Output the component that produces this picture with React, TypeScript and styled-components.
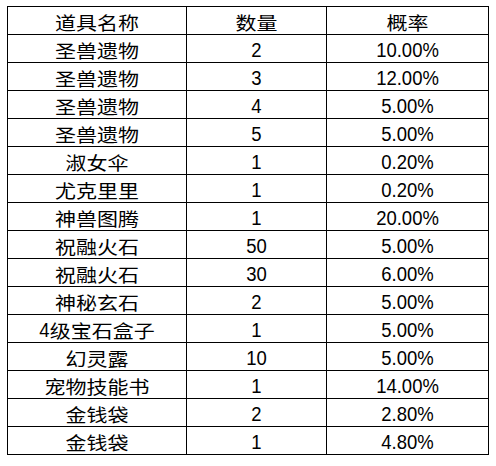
import React from 'react';
import styled, { createGlobalStyle } from 'styled-components';

const GlobalStyle = createGlobalStyle`
  html, body {
    margin: 0;
    padding: 0;
    background: #ffffff;
  }
`;

const Page = styled.div`
  padding: 6px 0 0 7px;
`;

// black background + 1px gaps draws the cell rules
const Grid = styled.div`
  display: inline-grid;
  grid-template-columns: 178px 139px 161px;
  grid-auto-rows: 27px;
  gap: 1px;
  padding: 1px;
  background: #000;
  color: #000;
`;

const Cell = styled.div`
  background: #fff;
  display: flex;
  align-items: center;
  justify-content: center;
  padding-top: 4px;
  box-sizing: border-box;
  white-space: nowrap;
`;

const Han = styled.span`
  display: inline-block;
  font-family: "Noto Sans CJK SC", sans-serif;
  font-size: 21px;
  line-height: 1;
  transform: scaleY(0.88);
`;

const Num = styled.span`
  display: inline-block;
  font-family: "Liberation Sans", Arial, sans-serif;
  font-size: 18.5px;
  line-height: 1;
  transform: scaleY(1.13);
`;

const rows: [string, string, string][] = [
  ['圣兽遗物', '2', '10.00%'],
  ['圣兽遗物', '3', '12.00%'],
  ['圣兽遗物', '4', '5.00%'],
  ['圣兽遗物', '5', '5.00%'],
  ['淑女伞', '1', '0.20%'],
  ['尤克里里', '1', '0.20%'],
  ['神兽图腾', '1', '20.00%'],
  ['祝融火石', '50', '5.00%'],
  ['祝融火石', '30', '6.00%'],
  ['神秘玄石', '2', '5.00%'],
  ['4级宝石盒子', '1', '5.00%'],
  ['幻灵露', '10', '5.00%'],
  ['宠物技能书', '1', '14.00%'],
  ['金钱袋', '2', '2.80%'],
  ['金钱袋', '1', '4.80%'],
];

// digits keep the latin face, han chars get the cjk one
const Label: React.FC<{ text: string }> = ({ text }) => {
  const parts = text.match(/[0-9.%]+|[^0-9.%]+/g) || [];
  return (
    <>
      {parts.map((p, i) => (/^[0-9.%]+$/.test(p) ? <Num key={i}>{p}</Num> : <Han key={i}>{p}</Han>))}
    </>
  );
};

export default function App() {
  return (
    <Page>
      <GlobalStyle />
      <Grid>
        <Cell><Label text="道具名称" /></Cell>
        <Cell><Label text="数量" /></Cell>
        <Cell><Label text="概率" /></Cell>
        {rows.map((r, i) => (
          <React.Fragment key={i}>
            <Cell><Label text={r[0]} /></Cell>
            <Cell><Label text={r[1]} /></Cell>
            <Cell><Label text={r[2]} /></Cell>
          </React.Fragment>
        ))}
      </Grid>
    </Page>
  );
}
